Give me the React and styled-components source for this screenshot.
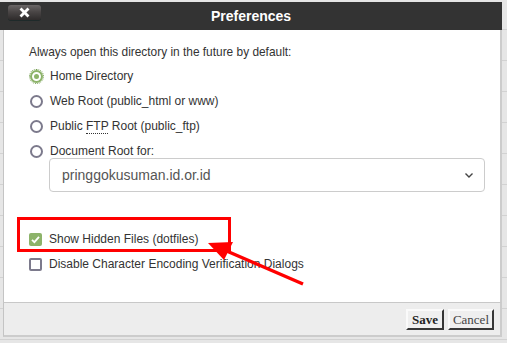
import React from "react";
import styled, { createGlobalStyle } from "styled-components";

const GlobalStyle = createGlobalStyle`
  html, body {
    margin: 0;
    padding: 0;
  }
  body {
    width: 507px;
    height: 343px;
    overflow: hidden;
    background-color: #e6e6e6;
    background-image: repeating-linear-gradient(
      to bottom,
      transparent 0px,
      transparent 29px,
      #d2d2d2 29px,
      #d2d2d2 30px,
      transparent 30px,
      transparent 31px
    );
    font-family: "Liberation Sans", Arial, sans-serif;
  }
`;

const Page = styled.div`
  padding-top: 2px;
  width: 502px;
`;

const Dialog = styled.div`
  display: flex;
  flex-direction: column;
`;

const Header = styled.div`
  position: relative;
  height: 28px;
  background: #333333;
  display: flex;
  align-items: center;
  justify-content: center;
  color: #fff;
  font-weight: bold;
  font-size: 14px;
`;

const CloseBtn = styled.div`
  position: absolute;
  left: 8px;
  top: 3px;
  width: 33px;
  height: 15px;
  border-radius: 3px;
  background: linear-gradient(to bottom, #6a6666 0%, #4a4646 45%, #2e2b2b 100%);
  box-shadow: 0 1px 0 #1e2a2a;
  display: flex;
  align-items: center;
  justify-content: center;
`;

const Body = styled.div`
  position: relative;
  margin-left: 3px;
  background: #fff;
  border-left: 1px solid #c4c4c4;
  border-right: 2px solid #cccccc;
  height: 272px;
  box-sizing: border-box;
  padding: 15px 0 0 25px;
  color: #333;
  font-size: 12px;
`;

const Intro = styled.div`
  font-size: 11.9px;
  line-height: 14px;
  margin-bottom: 10px;
`;

const OptionRow = styled.label`
  display: flex;
  align-items: center;
  gap: 7px;
  height: 14px;
  margin-bottom: 11px;
  padding-left: 1px;
  line-height: 14px;
`;

const Radio = styled.span`
  width: 13px;
  height: 13px;
  box-sizing: border-box;
  border-radius: 50%;
  border: 2px solid ${(p) => (p.$checked ? "#8db36a" : "#7c7a8c")};
  display: flex;
  align-items: center;
  justify-content: center;
  outline: ${(p) => (p.$checked ? "1px dotted #6f9a4a" : "none")};
  outline-offset: 0px;
  &::after {
    content: "";
    display: ${(p) => (p.$checked ? "block" : "none")};
    width: 5px;
    height: 5px;
    border-radius: 50%;
    background: #8db36a;
  }
`;

const Abbr = styled.span`
  border-bottom: 1px dotted #333;
  line-height: 11px;
`;

const SelectBox = styled.div`
  margin: -11px 0 0 20px;
  width: 436px;
  height: 34px;
  box-sizing: border-box;
  border: 1px solid #cccccc;
  border-radius: 4px;
  display: flex;
  align-items: center;
  justify-content: space-between;
  padding: 0 10px 0 12px;
  font-size: 14px;
  color: #555;
`;

const CheckRow = styled.label`
  display: flex;
  align-items: center;
  gap: 7px;
  height: 14px;
  line-height: 14px;
  margin-bottom: ${(p) => p.$gap || 0}px;
`;

const Box = styled.span`
  width: 13px;
  height: 13px;
  box-sizing: border-box;
  border-radius: 2px;
  border: ${(p) => (p.$checked ? "none" : "2px solid #7c7a8c")};
  background: ${(p) => (p.$checked ? "#8db36a" : "#fff")};
  display: flex;
  align-items: center;
  justify-content: center;
`;

const CheckGroup = styled.div`
  margin-top: 40px;
`;

const Highlight = styled.div`
  position: absolute;
  left: 13px;
  top: 187px;
  width: 214px;
  height: 35px;
  box-sizing: border-box;
  border: 3px solid #ff0000;
`;

const Arrow = styled.svg`
  position: absolute;
  left: -4px;
  top: -30px;
  pointer-events: none;
`;

const Footer = styled.div`
  margin-left: 3px;
  height: 35px;
  box-sizing: border-box;
  background: #ededed;
  border-top: 1px solid #c8c8c8;
  border-left: 1px solid #c4c4c4;
  border-right: 2px solid #cccccc;
  border-bottom: 2px solid #cccccc;
  display: flex;
  justify-content: flex-end;
  align-items: center;
  gap: 4px;
  padding: 0 6px 0 0;
`;

const Button = styled.button`
  font-family: "Liberation Serif", "Times New Roman", serif;
  font-size: 13px;
  font-weight: ${(p) => (p.$primary ? "bold" : "normal")};
  color: ${(p) => (p.$primary ? "#222" : "#444")};
  background: #efefef;
  border: 2px outset #e6e6e6;
  border-right-color: #8a8a8a;
  border-bottom-color: #8a8a8a;
  border-left-color: #fafafa;
  border-top-color: #fafafa;
  height: 21px;
  padding: 0 ${(p) => (p.$primary ? 4 : 3)}px;
  margin: 1px 0 0 0;
  line-height: 15px;
`;

export default function App() {
  return (
    <>
      <GlobalStyle />
      <Page>
        <Dialog>
          <Header>
            <CloseBtn>
              <svg width="11" height="11" viewBox="0 0 11 11">
                <path d="M2.5 2.5 L8.5 8.5 M8.5 2.5 L2.5 8.5" stroke="#fff" strokeWidth="2.8" strokeLinecap="square" />
              </svg>
            </CloseBtn>
            Preferences
          </Header>
          <Body>
            <Intro>Always open this directory in the future by default:</Intro>
            <OptionRow>
              <Radio $checked />
              Home Directory
            </OptionRow>
            <OptionRow>
              <Radio />
              Web Root (public_html or www)
            </OptionRow>
            <OptionRow>
              <Radio />
              <span>
                Public <Abbr>FTP</Abbr> Root (public_ftp)
              </span>
            </OptionRow>
            <OptionRow>
              <Radio />
              Document Root for:
            </OptionRow>
            <SelectBox>
              <span>pringgokusuman.id.or.id</span>
              <svg width="10" height="7" viewBox="0 0 10 7">
                <path d="M1.5 1.5 L5 5 L8.5 1.5" fill="none" stroke="#444" strokeWidth="1.4" />
              </svg>
            </SelectBox>
            <CheckGroup>
              <CheckRow $gap={11}>
                <Box $checked>
                  <svg width="11" height="11" viewBox="0 0 11 11">
                    <path d="M2 5.8 L4.4 8.2 L9 2.8" fill="none" stroke="#fff" strokeWidth="1.8" />
                  </svg>
                </Box>
                Show Hidden Files (dotfiles)
              </CheckRow>
              <CheckRow>
                <Box />
                Disable Character Encoding Verification Dialogs
              </CheckRow>
            </CheckGroup>
            <Highlight />
            <Arrow width="507" height="343" viewBox="0 0 507 343">
              <line x1="303" y1="284" x2="222" y2="249" stroke="#ff0000" strokeWidth="3.5" />
              <polygon points="208,243 233,242 224,260" fill="#ff0000" />
            </Arrow>
          </Body>
          <Footer>
            <Button $primary>Save</Button>
            <Button>Cancel</Button>
          </Footer>
        </Dialog>
      </Page>
    </>
  );
}
